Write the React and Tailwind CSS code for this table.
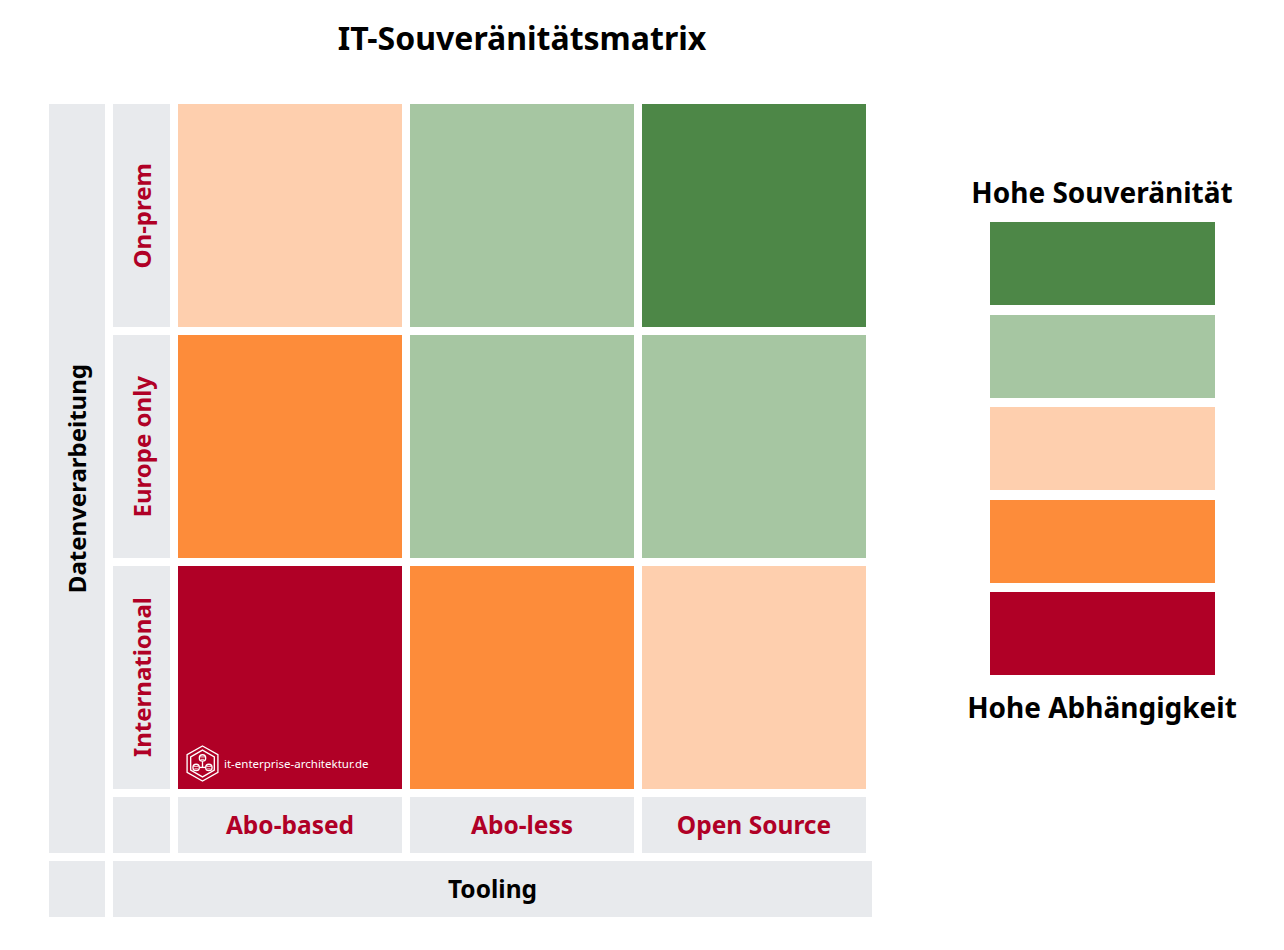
import React from "react";

const cellColors = [
  ["bg-[#fecfae]", "bg-[#a6c6a2]", "bg-[#4d8747]"],
  ["bg-[#fd8c3a]", "bg-[#a6c6a2]", "bg-[#a6c6a2]"],
  ["bg-[#b00026]", "bg-[#fd8c3a]", "bg-[#fecfae]"],
];

const rowLabels = ["On-prem", "Europe only", "International"];
const colLabels = ["Abo-based", "Abo-less", "Open Source"];

const legend = [
  "bg-[#4d8747]",
  "bg-[#a6c6a2]",
  "bg-[#fecfae]",
  "bg-[#fd8c3a]",
  "bg-[#b00026]",
];

const Logo = () => (
  <svg width="33" height="37" viewBox="0 0 32 36" fill="none" stroke="white" strokeWidth="1.3">
    <polygon points="16,1 31,9.5 31,26.5 16,35 1,26.5 1,9.5" />
    <polygon points="16,5 27.5,11.5 27.5,24.5 16,31 4.5,24.5 4.5,11.5" />
    {/* org chart */}
    <line x1="16" y1="15.8" x2="16" y2="21.8" />
    <line x1="13" y1="21.8" x2="19" y2="21.8" />
    <circle cx="16" cy="12.6" r="3.1" />
    <circle cx="9.8" cy="21.8" r="3.1" />
    <circle cx="22.2" cy="21.8" r="3.1" />
    <path d="M13.6 11.6h4.8M14.3 14h3.4M7.4 20.8h4.8M8.1 23.2h3.4M19.8 20.8h4.8M20.5 23.2h3.4" strokeWidth="0.8" />
  </svg>
);

export default function App() {
  return (
    <div
      className="w-[1284px] h-[950px] bg-white flex text-black"
      style={{ fontFamily: '"Noto Sans", "Open Sans", sans-serif' }}
    >
      {/* Matrix */}
      <div className="w-[872px] pl-[49px] pt-[19px] flex flex-col">
        <div className="pl-[129px] w-[817px] h-[85px] text-center">
          <h1 className="text-[32px] font-bold leading-[38px] whitespace-nowrap">IT-Souveränitätsmatrix</h1>
        </div>

        <div className="grid grid-cols-[56px_57px_224px_224px_224px] grid-rows-[223px_223px_223px_56px] gap-2">
          <div className="row-span-4 bg-[#e8eaed] flex items-center justify-center">
            <span className="[writing-mode:vertical-rl] rotate-180 text-[24px] font-bold leading-none">
              Datenverarbeitung
            </span>
          </div>

          {cellColors.map((row, r) => (
            <React.Fragment key={r}>
              <div className="bg-[#e8eaed] flex items-center justify-center">
                <span className="[writing-mode:vertical-rl] rotate-180 text-[24px] font-bold leading-none text-[#b00026]">
                  {rowLabels[r]}
                </span>
              </div>
              {row.map((color, c) => (
                <div key={c} className={`${color} flex items-end`}>
                  {r === 2 && c === 0 && (
                    <div className="flex items-center gap-[5px] pl-[8px] pb-[7px]">
                      <Logo />
                      <span className="text-white text-[11.5px] leading-none">it-enterprise-architektur.de</span>
                    </div>
                  )}
                </div>
              ))}
            </React.Fragment>
          ))}

          <div className="bg-[#e8eaed]" />
          {colLabels.map((label) => (
            <div key={label} className="bg-[#e8eaed] flex items-center justify-center">
              <span className="text-[24.5px] font-bold text-[#b00026]">{label}</span>
            </div>
          ))}
        </div>

        <div className="flex gap-2 mt-2">
          <div className="w-[56px] h-[56px] bg-[#e8eaed]" />
          <div className="w-[759px] h-[56px] bg-[#e8eaed] flex items-center justify-center">
            <span className="text-[24.5px] font-bold">Tooling</span>
          </div>
        </div>
      </div>

      {/* Legend */}
      <div className="ml-[80px] w-[300px] pt-[175px] flex flex-col items-center">
        <h2 className="text-[28px] font-bold leading-[34px] whitespace-nowrap">Hohe Souveränität</h2>
        <div className="mt-[13px] flex flex-col gap-[9.5px]">
          {legend.map((color) => (
            <div key={color} className={`${color} w-[225px] h-[83px]`} />
          ))}
        </div>
        <h2 className="mt-[15px] text-[28px] font-bold leading-[34px] whitespace-nowrap">Hohe Abhängigkeit</h2>
      </div>
    </div>
  );
}
